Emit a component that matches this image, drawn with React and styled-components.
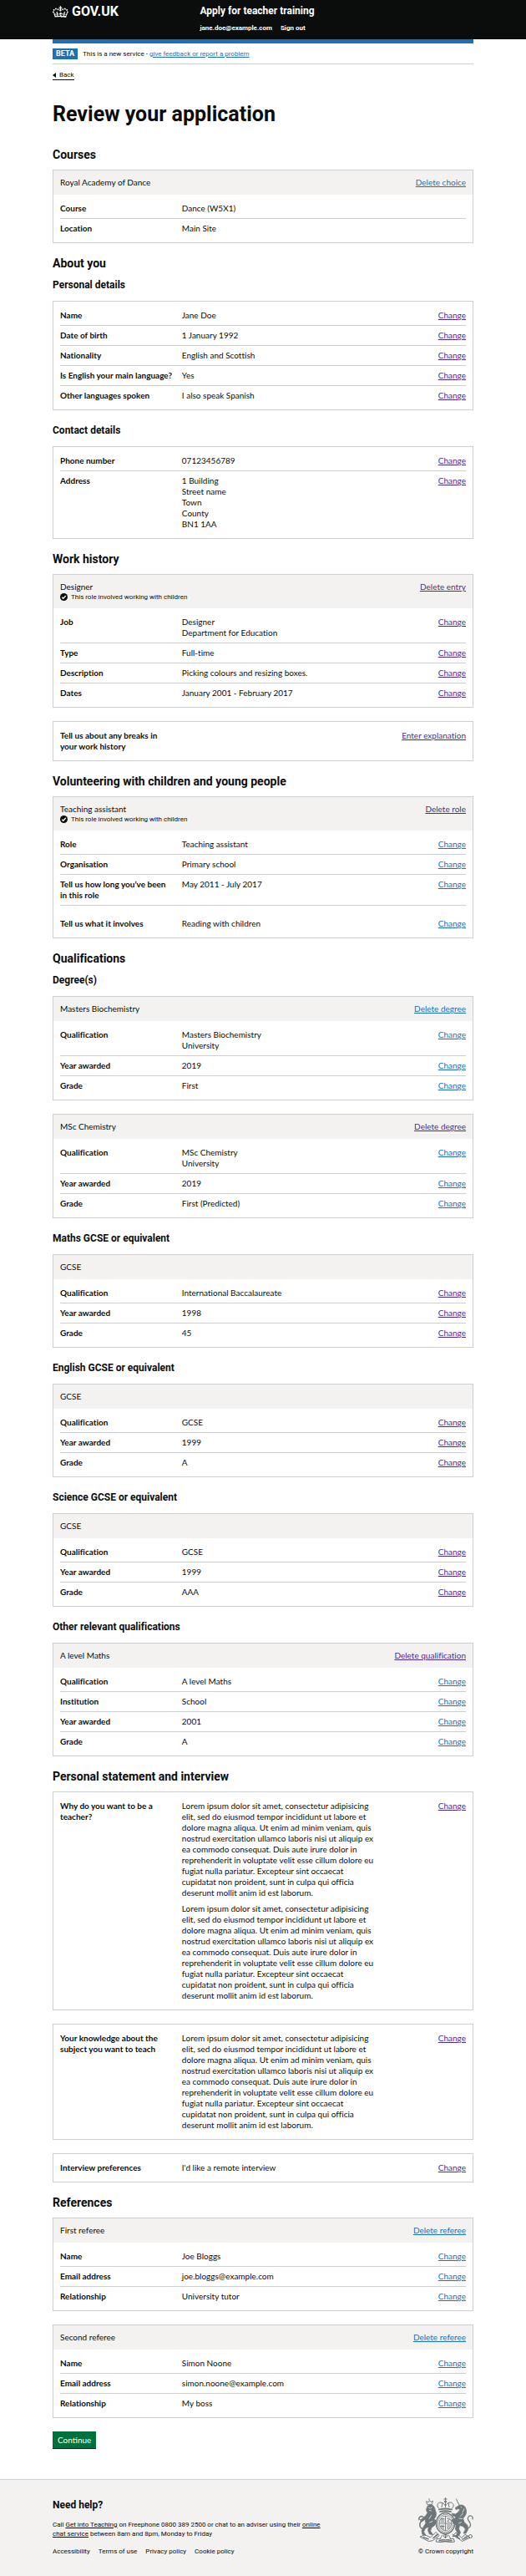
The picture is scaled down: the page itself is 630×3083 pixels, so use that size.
import React from "react";
import styled, { createGlobalStyle, css } from "styled-components";

const ink = "#0b0c0c";
const line = "#ccced0";
const pale = "#f3f2f1";
const blue = "#1d70b8";
const purple = "#4c2c92";

const GlobalStyle = createGlobalStyle`
  *, *::before, *::after { box-sizing: border-box; }
  body {
    margin: 0;
    background: #fff;
    color: ${ink};
    font: 400 10px/13px Lato, Roboto, "Liberation Sans", sans-serif;
    font-variant-ligatures: none;
  }
  h1, h2, h3, p, dl, dd, ul { margin: 0; padding: 0; }
  h1, h2, h3 { font-family: Roboto, "Liberation Sans", sans-serif; font-weight: 700; }
`;

const smallText = css`
  font-family: Roboto, "Liberation Sans", sans-serif;
  font-size: 8px;
  line-height: 11px;
`;

/* Masthead */
const Masthead = styled.header`
  background: ${ink};
  padding: 5px 10% 7px;
  display: flex;
  color: #fff;
`;
const LogoCell = styled.div`width: 35%;`;
const Logo = styled.a`
  display: inline-flex;
  align-items: center;
  gap: 4px;
  color: #fff;
  text-decoration: none;
  font: 700 16px/16px Roboto, "Liberation Sans", sans-serif;
`;
const ServiceName = styled.a`
  display: block;
  color: #fff;
  text-decoration: none;
  font: 700 12px/16px Roboto, "Liberation Sans", sans-serif;
`;
const AccountNav = styled.nav`
  display: flex;
  gap: 10px;
  margin-top: 7px;
  a { ${smallText} line-height: 12px; font-weight: 700; color: #fff; text-decoration: none; }
`;

/* Page shell */
const Container = styled.div`padding: 0 10%;`;
const PhaseBanner = styled.div`
  display: flex;
  align-items: center;
  gap: 6px;
  border-top: 5px solid ${blue};
  border-bottom: 1px solid ${line};
  padding: 6px 0 5px;
  ${smallText}
`;
const Tag = styled.strong`
  background: ${blue};
  color: #fff;
  padding: 0 4px;
  font-size: 9px;
  line-height: 13px;
`;
const Link = styled.a`
  color: ${(p) => (p.$visited ? purple : p.$plain ? ink : blue)};
  text-decoration: underline;
  text-underline-offset: 1px;
`;
const BackLink = styled.a`
  display: inline-flex;
  align-items: center;
  gap: 4px;
  margin-top: 8px;
  border-bottom: 1px solid ${ink};
  color: ${ink};
  text-decoration: none;
  ${smallText}
  line-height: 10px;
  &::before {
    content: "";
    border: 3px solid transparent;
    border-left-width: 0;
    border-right: 4px solid ${ink};
  }
`;
const PageTitle = styled.h1`
  font-size: 25px;
  line-height: 26px;
  margin: 28px 0 27px;
`;
const SectionTitle = styled.h2`font-size: 14px; line-height: 16px; margin-bottom: 10px;`;
const SubTitle = styled.h3`font-size: 12px; line-height: 16px; margin-bottom: 11px;`;

/* Summary cards */
const Card = styled.section`border: 1px solid ${line}; margin-bottom: 16px;`;
const CardHeader = styled.header`
  display: flex;
  justify-content: space-between;
  background: ${pale};
  padding: 8px;
`;
const RoleNote = styled.p`
  display: flex;
  align-items: center;
  gap: 4px;
  ${smallText}
`;
const Summary = styled.dl`padding: 5px 8px;`;
const Row = styled.div`
  display: flex;
  padding: ${(p) => (p.$spaced ? "15px" : "5px")} 0 5px;
  &:not(:first-child) { border-top: 1px solid ${line}; }
`;
const Key = styled.dt`width: 30%; padding-right: 10px; font-weight: 700;`;
const Value = styled.dd`
  width: 50%;
  padding-right: 10px;
  display: flex;
  flex-direction: column;
  gap: ${(p) => (p.$para ? "6px" : "0")};
`;
const Action = styled.dd`width: 20%; text-align: right;`;
const Continue = styled.button`
  display: block;
  border: 0;
  background: #00703c;
  box-shadow: 0 1px 0 #002d18;
  color: #fff;
  font: 400 10px/12px Lato, Roboto, sans-serif;
  padding: 4px 6px;
  margin-bottom: 37px;
`;

/* Footer */
const Footer = styled.footer`
  background: ${pale};
  border-top: 1px solid ${line};
  padding: 21px 10% 26px;
  display: flex;
  justify-content: space-between;
  align-items: flex-end;
  ${smallText}
`;
const FooterMain = styled.div`width: 67%;`;
const FooterTitle = styled.h2`font-size: 12px; line-height: 16px; margin-bottom: 10px;`;
const FooterLinks = styled.ul`
  display: flex;
  gap: 10px;
  margin-top: 10px;
  list-style: none;
  a { color: ${ink}; text-decoration: none; }
`;
const Copyright = styled.a`
  display: flex;
  flex-direction: column;
  align-items: center;
  gap: 5px;
  color: ${ink};
  text-decoration: none;
  white-space: nowrap;
`;

const Crown = () => (
  <svg width="19" height="17" viewBox="0 0 36 32" fill="#fff" aria-hidden="true">
    <path fillRule="evenodd" d="M6.7 12.2c1 .4 2.1-.1 2.5-1s-.1-2.1-1-2.5c-1-.4-2.1.1-2.5 1-.4 1 0 2.1 1 2.5m-4.3 2.5c1 .4 2.1-.1 2.5-1s-.1-2.1-1-2.5c-1-.4-2.1.1-2.5 1-.5 1 0 2.1 1 2.5m-1.3 4.8c1 .4 2.1-.1 2.5-1 .4-1-.1-2.1-1-2.5-1-.4-2.1.1-2.5 1-.4 1 0 2.1 1 2.5m10.4-5.8c1 .4 2.1-.1 2.5-1s-.1-2.1-1-2.5c-1-.4-2.1.1-2.5 1s0 2.1 1 2.5m17.4-1.5c-1 .4-2.1-.1-2.5-1s.1-2.1 1-2.5c1-.4 2.1.1 2.5 1 .5 1 0 2.1-1 2.5m4.3 2.5c-1 .4-2.1-.1-2.5-1s.1-2.1 1-2.5c1-.4 2.1.1 2.5 1 .5 1 0 2.1-1 2.5m1.3 4.8c-1 .4-2.1-.1-2.5-1-.4-1 .1-2.1 1-2.5 1-.4 2.1.1 2.5 1 .4 1 0 2.1-1 2.5m-10.4-5.8c-1 .4-2.1-.1-2.5-1s.1-2.1 1-2.5c1-.4 2.1.1 2.5 1s0 2.1-1 2.5m-5.3-4.9 2.4 1.3V6.5l-2.4.8c-.1-.1-.1-.2-.2-.2s1-3 1-3h-3.4l1 3c-.1.1-.2.1-.2.2-.1.1-2.4-.7-2.4-.7v3.5L17 8.8c-.1.1 0 .2.1.3l-1.4 4.2c-.1.2-.1.4-.1.7 0 1.1.8 2.1 1.9 2.2h.6C19.2 16 20 15.1 20 14c0-.2 0-.4-.1-.7l-1.4-4.2c.2-.1.3-.2.3-.3m-1 20.3c4.6 0 8.9.3 12.8.9 1.1-4.6 2.4-7.2 3.8-9.1l-2.6-.9c.3 1.3.3 1.9 0 2.8-.4-.4-.8-1.2-1.1-2.4l-1.2 4.2c.8-.5 1.4-.9 2-.9-1.2 2.6-2.6 3.1-3.5 3-1.1-.2-1.7-1.2-1.5-2.1.3-1.2 1.5-1.5 2.1-.1 1.1-2.3-.8-3-2-2.3 1.9-1.9 2.1-3.5.6-5.6-2.1 1.6-2.2 3.2-1.3 5.5-1.2-1.4-3.1-.6-2.5 1.6.9-1.3 2.1-.5 1.9.8-.2 1.1-1.7 2.1-3.5 1.9-2.7-.2-2.9-2.1-2.9-3.6.7-.1 1.9.5 2.9 1.9l.4-4.3c-1.1 1.1-2.1 1.4-3.2 1.4.4-1.2 2.1-3 2.1-3h-5.4s1.7 1.9 2.1 3c-1.1 0-2.1-.2-3.2-1.4l.4 4.3c1-1.4 2.2-2 2.9-1.9-.1 1.5-.2 3.4-2.9 3.6-1.9.2-3.4-.8-3.5-1.9-.2-1.3 1-2.2 1.9-.8.7-2.3-1.2-3-2.5-1.6.9-2.2.9-3.9-1.3-5.5-1.5 2-1.3 3.7.6 5.6-1.2-.7-3.1 0-2 2.3.6-1.4 1.8-1.1 2.1.1.2.9-.3 1.9-1.5 2.1-.9.2-2.4-.5-3.5-3 .6 0 1.2.3 2 .9l-1.2-4.2c-.3 1.1-.7 1.9-1.1 2.4-.3-.8-.2-1.4 0-2.8l-2.9.9C2.7 22 4 24.7 5.1 29.3c3.8-.5 8.2-.9 12.7-.9" />
  </svg>
);

const Tick = () => (
  <svg width="9" height="9" viewBox="0 0 18 18" aria-hidden="true">
    <circle cx="9" cy="9" r="9" fill={ink} />
    <path d="M4.5 9.5l3 3 6-6.5" fill="none" stroke="#fff" strokeWidth="2.6" />
  </svg>
);

const RoyalArms = () => (
  <svg width="66" height="54" viewBox="0 0 132 108" fill="none" stroke="#6d7678" strokeLinecap="round" strokeLinejoin="round" aria-hidden="true">
    {/* central crown */}
    <path strokeWidth="2" d="M65 1v8M61.500 4h7M50 27c-8-6-4-16 4-15 6 1 9 4 11 9 2-5 5-8 11-9 8-1 12 9 4 15M65 10v13M58 14l-2 9M72 14l2 9" />
    <path strokeWidth="3.500" d="M50 29q15-4 30 0M52 34q13-3 26 0" />
    <circle cx="65" cy="10" r="2.500" fill="#6d7678" />
    {/* garter and shield */}
    <ellipse cx="65" cy="62" rx="22" ry="25" strokeWidth="3" />
    <ellipse cx="65" cy="62" rx="18" ry="21" strokeWidth="2" strokeDasharray="2 2.500" />
    <ellipse cx="65" cy="62" rx="14.500" ry="17.500" strokeWidth="1.500" />
    <path strokeWidth="1.800" d="M65 45v34M51 62h28M55 51h7M54 54h8M54 58h8M69 50l6 3-6 4 5 2M56 66v9M60 66v11M53 69h9M69 66h7M69 70h7M69 74h5" />
    {/* lion */}
    <path fill="#6d7678" strokeWidth="1.500" d="M22 21c3-5 12-5 15 0 4 5 3 11 6 16l-1 9-4 5 6 7-5 9-7 5-3 8 6 9-8-1-4-9 2-9-8 4-4 8 5 9-8-2-2-9 5-11 5-7-2-10-6 5-6-3 7-4 7-7 4-6-3-7z" />
    <path stroke="#f3f2f1" strokeWidth="1.600" d="M25 24l3 2M32 23l-2 3M27 31l4 1M31 43l-5 8M34 57l-7 3" />
    <path strokeWidth="1.800" d="M21 16l-2-7 5 3 3-5 3 4 5-3-2 8zM26 6v-3" />
    <path strokeWidth="3" d="M12 76C1 72 2 60 9 56c6-4 5-10-1-11-5 0-7 4-6 8" />
    {/* unicorn */}
    <path strokeWidth="2" d="M99 20L91 4" />
    <path fill="#6d7678" strokeWidth="1.500" d="M98 19c7-3 14 1 16 8 2 7 1 12-2 17l-5 6 3 9 8 8 1 10-5 9h-6l5-10-6-7-8-2-2 8 4 9-4 8-8 2 5-9-5-9 1-9-6-6-5-7 7-2 4-6-7-2-3-6 9 2 7-5 4-6-4-2-6 2-1-4z" />
    <path stroke="#f3f2f1" strokeWidth="1.600" d="M102 23l2 1M110 27l-4 9M107 39l-6 5M103 59l-6 3M98 50l7 1" />
    <path strokeWidth="2.500" d="M117 75c12-5 8-14 4-19-5-6-1-13 5-12 4 1 5 4 4 8" />
    {/* ground, roses and motto scroll */}
    <circle cx="125" cy="93" r="4" strokeWidth="2" />
    <path strokeWidth="2" d="M121 92l-10 3M48 88l-12 10M82 88l12 10M58 90l-6 9M72 90l6 9M65 87v10" />
    <circle cx="65" cy="92" r="4" strokeWidth="2" />
    <path strokeWidth="2" d="M5 94l11-5 13 7 13-13 8 8-15 12-9 2zM113 89l11 7-19 9-15-12-8 0 8-9 13 12zM46 98q19 7 38 0l3 8q-22 5-44 0z" />
    <path strokeWidth="3" strokeDasharray="3 2" d="M12 95l13 5M36 97l9-8M88 91l11 8M106 100l11-4M50 103q15 3 30 0" />
  </svg>
);

function ListRow({ k, v, visited, action = "Change", para, spaced }) {
  const lines = Array.isArray(v) ? v : v ? [v] : [];
  return (
    <Row $spaced={spaced}>
      <Key>{k}</Key>
      <Value $para={para}>{lines.map((t, i) => <p key={i}>{t}</p>)}</Value>
      <Action>{action && <Link href="#change" $visited={visited}>{action}</Link>}</Action>
    </Row>
  );
}

function SummaryCard({ title, note, remove, removeVisited, visited, rows }) {
  return (
    <Card>
      {title && (
        <CardHeader>
          <div>
            <p>{title}</p>
            {note && <RoleNote><Tick />{note}</RoleNote>}
          </div>
          {remove && <Link href="#delete" $visited={removeVisited}>{remove}</Link>}
        </CardHeader>
      )}
      <Summary>
        {rows.map(([k, v, extra]) => <ListRow key={k} k={k} v={v} visited={visited} {...extra} />)}
      </Summary>
    </Card>
  );
}

const lorem =
  "Lorem ipsum dolor sit amet, consectetur adipisicing elit, sed do eiusmod tempor incididunt ut labore et dolore magna aliqua. Ut enim ad minim veniam, quis nostrud exercitation ullamco laboris nisi ut aliquip ex ea commodo consequat. Duis aute irure dolor in reprehenderit in voluptate velit esse cillum dolore eu fugiat nulla pariatur. Excepteur sint occaecat cupidatat non proident, sunt in culpa qui officia deserunt mollit anim id est laborum.";
const withChildren = "This role involved working with children";

export default function App() {
  return (
    <>
      <GlobalStyle />
      <Masthead>
        <LogoCell><Logo href="#home"><Crown />GOV.UK</Logo></LogoCell>
        <div>
          <ServiceName href="#service">Apply for teacher training</ServiceName>
          <AccountNav>
            <a href="#account">jane.doe@example.com</a>
            <a href="#signout">Sign out</a>
          </AccountNav>
        </div>
      </Masthead>
      <Container>
        <PhaseBanner>
          <Tag>BETA</Tag>
          <span>This is a new service - <Link href="#feedback">give feedback or report a problem</Link></span>
        </PhaseBanner>
        <BackLink href="#back">Back</BackLink>
        <main>
          <PageTitle>Review your application</PageTitle>

          <SectionTitle>Courses</SectionTitle>
          <SummaryCard title="Royal Academy of Dance" remove="Delete choice" rows={[
            ["Course", "Dance (W5X1)", { action: null }],
            ["Location", "Main Site", { action: null }],
          ]} />

          <SectionTitle>About you</SectionTitle>
          <SubTitle>Personal details</SubTitle>
          <SummaryCard visited rows={[
            ["Name", "Jane Doe"],
            ["Date of birth", "1 January 1992"],
            ["Nationality", "English and Scottish"],
            ["Is English your main language?", "Yes"],
            ["Other languages spoken", "I also speak Spanish"],
          ]} />
          <SubTitle>Contact details</SubTitle>
          <SummaryCard visited rows={[
            ["Phone number", "07123456789"],
            ["Address", ["1 Building", "Street name", "Town", "County", "BN1 1AA"]],
          ]} />

          <SectionTitle>Work history</SectionTitle>
          <SummaryCard title="Designer" note={withChildren} remove="Delete entry" removeVisited visited rows={[
            ["Job", ["Designer", "Department for Education"]],
            ["Type", "Full-time"],
            ["Description", "Picking colours and resizing boxes."],
            ["Dates", "January 2001 - February 2017"],
          ]} />
          <SummaryCard visited rows={[
            ["Tell us about any breaks in your work history", null, { action: "Enter explanation" }],
          ]} />

          <SectionTitle>Volunteering with children and young people</SectionTitle>
          <SummaryCard title="Teaching assistant" note={withChildren} remove="Delete role" removeVisited rows={[
            ["Role", "Teaching assistant"],
            ["Organisation", "Primary school"],
            ["Tell us how long you’ve been in this role", "May 2011 - July 2017"],
            ["Tell us what it involves", "Reading with children", { spaced: true }],
          ]} />

          <SectionTitle>Qualifications</SectionTitle>
          <SubTitle>Degree(s)</SubTitle>
          <SummaryCard title="Masters Biochemistry" remove="Delete degree" rows={[
            ["Qualification", ["Masters Biochemistry", "University"]],
            ["Year awarded", "2019"],
            ["Grade", "First"],
          ]} />
          <SummaryCard title="MSc Chemistry" remove="Delete degree" removeVisited rows={[
            ["Qualification", ["MSc Chemistry", "University"]],
            ["Year awarded", "2019"],
            ["Grade", "First (Predicted)"],
          ]} />
          <SubTitle>Maths GCSE or equivalent</SubTitle>
          <SummaryCard title="GCSE" visited rows={[
            ["Qualification", "International Baccalaureate"],
            ["Year awarded", "1998"],
            ["Grade", "45"],
          ]} />
          <SubTitle>English GCSE or equivalent</SubTitle>
          <SummaryCard title="GCSE" visited rows={[
            ["Qualification", "GCSE"],
            ["Year awarded", "1999"],
            ["Grade", "A"],
          ]} />
          <SubTitle>Science GCSE or equivalent</SubTitle>
          <SummaryCard title="GCSE" visited rows={[
            ["Qualification", "GCSE"],
            ["Year awarded", "1999"],
            ["Grade", "AAA"],
          ]} />
          <SubTitle>Other relevant qualifications</SubTitle>
          <SummaryCard title="A level Maths" remove="Delete qualification" removeVisited rows={[
            ["Qualification", "A level Maths"],
            ["Institution", "School"],
            ["Year awarded", "2001"],
            ["Grade", "A"],
          ]} />

          <SectionTitle>Personal statement and interview</SectionTitle>
          <SummaryCard visited rows={[["Why do you want to be a teacher?", [lorem, lorem], { para: true }]]} />
          <SummaryCard visited rows={[["Your knowledge about the subject you want to teach", lorem]]} />
          <SummaryCard visited rows={[["Interview preferences", "I'd like a remote interview"]]} />

          <SectionTitle>References</SectionTitle>
          <SummaryCard title="First referee" remove="Delete referee" rows={[
            ["Name", "Joe Bloggs"],
            ["Email address", "joe.bloggs@example.com"],
            ["Relationship", "University tutor"],
          ]} />
          <SummaryCard title="Second referee" remove="Delete referee" rows={[
            ["Name", "Simon Noone"],
            ["Email address", "simon.noone@example.com"],
            ["Relationship", "My boss"],
          ]} />
          <Continue type="button">Continue</Continue>
        </main>
      </Container>
      <Footer>
        <FooterMain>
          <FooterTitle>Need help?</FooterTitle>
          <p>
            Call <Link $plain href="#teaching">Get into Teaching</Link> on Freephone 0800 389 2500 or chat to an adviser using their <Link $plain href="#chat">online chat service</Link> between 8am and 8pm, Monday to Friday
          </p>
          <FooterLinks>
            <li><a href="#accessibility">Accessibility</a></li>
            <li><a href="#terms">Terms of use</a></li>
            <li><a href="#privacy">Privacy policy</a></li>
            <li><a href="#cookies">Cookie policy</a></li>
          </FooterLinks>
        </FooterMain>
        <Copyright href="#copyright"><RoyalArms />© Crown copyright</Copyright>
      </Footer>
    </>
  );
}
